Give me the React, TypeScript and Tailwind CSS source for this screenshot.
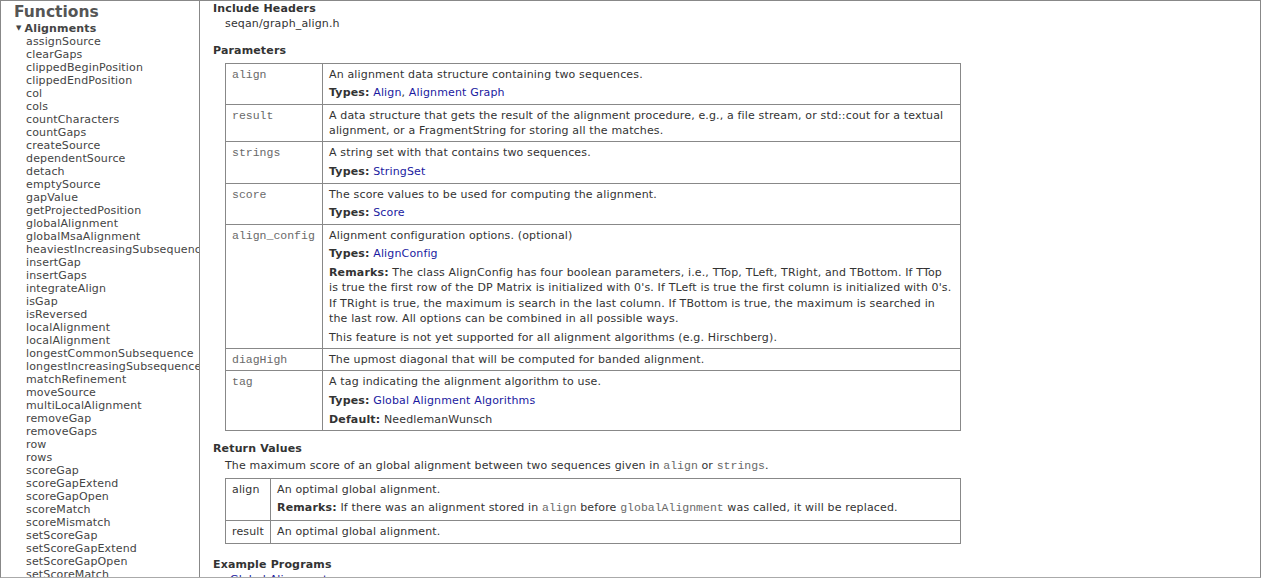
const functions = [
  "assignSource",
  "clearGaps",
  "clippedBeginPosition",
  "clippedEndPosition",
  "col",
  "cols",
  "countCharacters",
  "countGaps",
  "createSource",
  "dependentSource",
  "detach",
  "emptySource",
  "gapValue",
  "getProjectedPosition",
  "globalAlignment",
  "globalMsaAlignment",
  "heaviestIncreasingSubsequence",
  "insertGap",
  "insertGaps",
  "integrateAlign",
  "isGap",
  "isReversed",
  "localAlignment",
  "localAlignment",
  "longestCommonSubsequence",
  "longestIncreasingSubsequence",
  "matchRefinement",
  "moveSource",
  "multiLocalAlignment",
  "removeGap",
  "removeGaps",
  "row",
  "rows",
  "scoreGap",
  "scoreGapExtend",
  "scoreGapOpen",
  "scoreMatch",
  "scoreMismatch",
  "setScoreGap",
  "setScoreGapExtend",
  "setScoreGapOpen",
  "setScoreMatch",
  "setScoreMismatch",
];

const verdana = "font-['Verdana','DejaVu_Sans',sans-serif] tracking-[0.15px]";
const mono = "font-['Courier_New','Liberation_Mono',monospace] text-[11.5px] tracking-normal text-[#6a6a6a]";

function A({ children }: { children: React.ReactNode }) {
  return <span className="text-[#1a1aa0]">{children}</span>;
}

function Code({ children }: { children: React.ReactNode }) {
  return <span className={mono}>{children}</span>;
}

function P({ children, first }: { children: React.ReactNode; first?: boolean }) {
  return <p className={first ? "" : "mt-[3.25px]"}>{children}</p>;
}

type Param = { name: string; body: React.ReactNode };

const params: Param[] = [
  {
    name: "align",
    body: (
      <>
        <P first>An alignment data structure containing two sequences.</P>
        <P>
          <b>Types:</b> <A>Align</A>, <A>Alignment Graph</A>
        </P>
      </>
    ),
  },
  {
    name: "result",
    body: (
      <P first>
        A data structure that gets the result of the alignment procedure, e.g., a file stream, or std::cout for a textual
        alignment, or a FragmentString for storing all the matches.
      </P>
    ),
  },
  {
    name: "strings",
    body: (
      <>
        <P first>A string set with that contains two sequences.</P>
        <P>
          <b>Types:</b> <A>StringSet</A>
        </P>
      </>
    ),
  },
  {
    name: "score",
    body: (
      <>
        <P first>The score values to be used for computing the alignment.</P>
        <P>
          <b>Types:</b> <A>Score</A>
        </P>
      </>
    ),
  },
  {
    name: "align_config",
    body: (
      <>
        <P first>Alignment configuration options. (optional)</P>
        <P>
          <b>Types:</b> <A>AlignConfig</A>
        </P>
        <p className="mt-[3.25px] whitespace-nowrap">
          <b>Remarks:</b> The class AlignConfig has four boolean parameters, i.e., TTop, TLeft, TRight, and TBottom. If TTop
          <br />
          is true the first row of the DP Matrix is initialized with 0's. If TLeft is true the first column is initialized with 0's.
          <br />
          If TRight is true, the maximum is search in the last column. If TBottom is true, the maximum is searched in
          <br />
          the last row. All options can be combined in all possible ways.
        </p>
        <P>This feature is not yet supported for all alignment algorithms (e.g. Hirschberg).</P>
      </>
    ),
  },
  {
    name: "diagHigh",
    body: <P first>The upmost diagonal that will be computed for banded alignment.</P>,
  },
  {
    name: "tag",
    body: (
      <>
        <P first>A tag indicating the alignment algorithm to use.</P>
        <P>
          <b>Types:</b> <A>Global Alignment Algorithms</A>
        </P>
        <P>
          <b>Default:</b> NeedlemanWunsch
        </P>
      </>
    ),
  },
];

function Sidebar() {
  return (
    <div className="w-[199px] shrink-0 overflow-hidden border-r border-[#888] text-[#555]">
      <div className="pl-[13px] pt-[1px] text-[15.5px] font-bold leading-[20px] tracking-normal text-[#555]">Functions</div>
      <div className="flex items-center pl-[15px] text-[11px] font-bold leading-[13px] text-[#444]">
        <span className="mr-[3px] text-[7px]">▼</span>
        <span>Alignments</span>
      </div>
      <ul className="pl-[25px] text-[11px] leading-[13px] text-[#444]">
        {functions.map((f, i) => (
          <li key={i} className="whitespace-nowrap">
            {f}
          </li>
        ))}
      </ul>
    </div>
  );
}

export default function App() {
  return (
    <div className={`${verdana} h-[578px] w-[1261px] overflow-hidden bg-white`}>
      <div className="flex h-[578px] border border-[#888] border-b-[#aaa]">
        <Sidebar />
        <div className="flex-1 overflow-hidden pl-[13px] text-[11px] leading-[1.4] text-[#333]">
          <h3 className="font-bold">Include Headers</h3>
          <div className="pl-[12px]">seqan/graph_align.h</div>

          <h3 className="mt-[11.5px] font-bold">Parameters</h3>
          <table className="mt-[4px] ml-[12px] w-[736px] border-collapse">
            <tbody>
              {params.map((p) => (
                <tr key={p.name}>
                  <td className="w-[97px] border border-[#888] px-[6px] py-[3px] align-top leading-[15px]">
                    <Code>{p.name}</Code>
                  </td>
                  <td className="border border-[#888] px-[6px] py-[3px] align-top">{p.body}</td>
                </tr>
              ))}
            </tbody>
          </table>

          <h3 className="mt-[10px] font-bold">Return Values</h3>
          <div className="mt-[2px] pl-[12px]">
            The maximum score of an global alignment between two sequences given in <Code>align</Code> or{" "}
            <Code>strings</Code>.
          </div>
          <table className="mt-[3px] ml-[12px] w-[736px] border-collapse">
            <tbody>
              <tr>
                <td className="w-[45px] border border-[#888] px-[6px] py-[3.25px] align-top">align</td>
                <td className="border border-[#888] px-[6px] py-[3.25px] align-top">
                  <P first>An optimal global alignment.</P>
                  <p className="mt-[3px]">
                    <b>Remarks:</b> If there was an alignment stored in <Code>align</Code> before{" "}
                    <Code>globalAlignment</Code> was called, it will be replaced.
                  </p>
                </td>
              </tr>
              <tr>
                <td className="border border-[#888] px-[6px] py-[3.5px] align-top">result</td>
                <td className="border border-[#888] px-[6px] py-[3.5px] align-top">An optimal global alignment.</td>
              </tr>
            </tbody>
          </table>

          <h3 className="mt-[13px] font-bold">Example Programs</h3>
          <div className="pl-[17px]">
            <A>Global Alignment</A>
          </div>
        </div>
      </div>
    </div>
  );
}
